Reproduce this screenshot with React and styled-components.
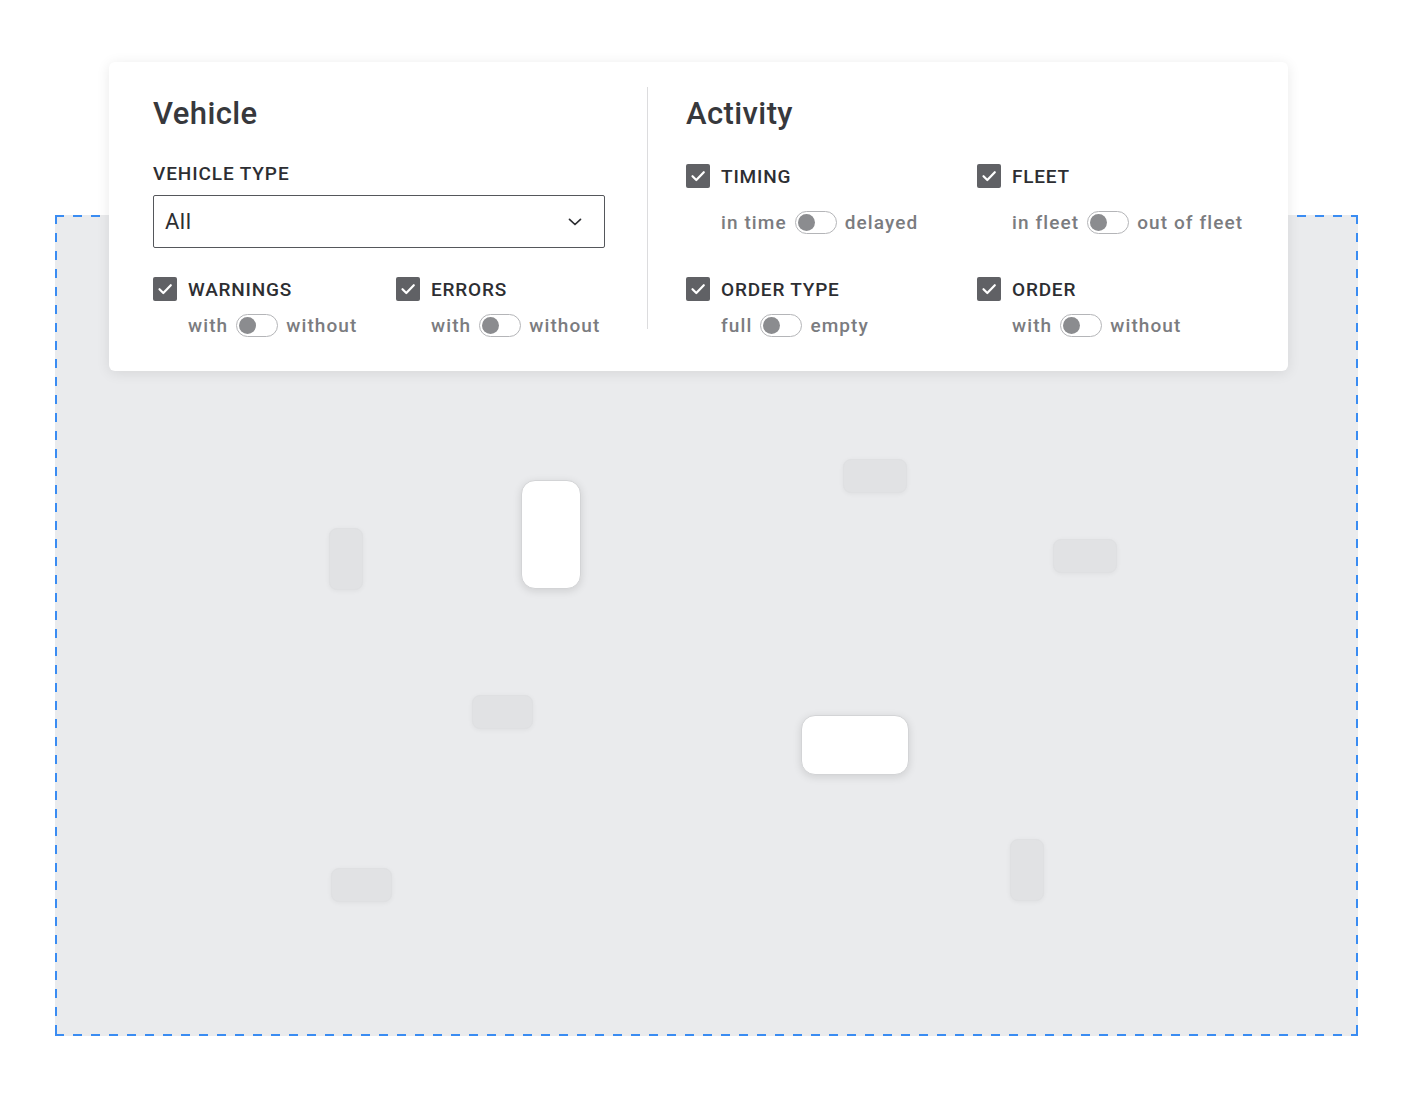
import React, { useState } from 'react';
import styled, { createGlobalStyle } from 'styled-components';

const GlobalStyle = createGlobalStyle`
  html, body {
    margin: 0;
    padding: 0;
    background: #ffffff;
  }
  body {
    font-family: Roboto, "Liberation Sans", sans-serif;
    -webkit-font-smoothing: antialiased;
  }
`;

const Stage = styled.div`
  position: relative;
  width: 1405px;
  height: 1098px;
  padding: 215px 0 0 55px;
  box-sizing: border-box;
`;

const DASH = '#3a8cf2';

const MapArea = styled.div`
  position: relative;
  width: 1303px;
  height: 821px;
  background:
    linear-gradient(90deg, ${DASH} 52%, transparent 52%) top left / 18px 2px repeat-x,
    linear-gradient(90deg, ${DASH} 52%, transparent 52%) bottom left / 18px 2px repeat-x,
    linear-gradient(180deg, ${DASH} 52%, transparent 52%) top left / 2px 18px repeat-y,
    linear-gradient(180deg, ${DASH} 52%, transparent 52%) top right / 2px 18px repeat-y,
    #eaebed;
`;

const Node = styled.div`
  position: absolute;
  box-sizing: border-box;
  background: ${p => (p.$active ? '#ffffff' : '#e1e2e4')};
  border-radius: ${p => (p.$active ? '14px' : '8px')};
  border: 1px solid ${p => (p.$active ? '#d3d4d6' : '#dfe0e2')};
  box-shadow: ${p =>
    p.$active ? '0 2px 8px rgba(0, 0, 0, 0.12)' : '0 1px 5px rgba(0, 0, 0, 0.05)'};
`;

const Panel = styled.div`
  position: absolute;
  left: 109px;
  top: 62px;
  width: 1179px;
  height: 309px;
  box-sizing: border-box;
  padding: 32px 44px 0;
  display: flex;
  background: #ffffff;
  border-radius: 6px;
  box-shadow: 0 2px 14px rgba(0, 0, 0, 0.09);
  z-index: 2;
`;

const Section = styled.section`
  width: ${p => p.$width}px;
  flex-shrink: 0;
`;

const Divider = styled.div`
  width: 1px;
  flex-shrink: 0;
  align-self: flex-start;
  height: 242px;
  margin: -7px 38px 0 42px;
  background: #dcdcde;
`;

const Heading = styled.h2`
  margin: 0;
  height: 36px;
  line-height: 40px;
  font-size: 31px;
  font-weight: 500;
  color: #37383c;
  letter-spacing: 0.4px;
`;

const FieldLabel = styled.div`
  margin-top: 32px;
  height: 24px;
  line-height: 24px;
  font-size: 19px;
  font-weight: 500;
  color: #2d2e32;
  letter-spacing: 0.9px;
  text-transform: uppercase;
`;

const SelectBox = styled.div`
  margin-top: 9px;
  height: 53px;
  box-sizing: border-box;
  border: 1.5px solid #55575b;
  border-radius: 2px;
  display: flex;
  align-items: center;
  justify-content: space-between;
  padding: 0 22px 0 11px;
  font-size: 22px;
  color: #2d2e32;
  letter-spacing: 0.5px;
  cursor: pointer;
`;

const Grid = styled.div`
  display: grid;
  grid-template-columns: repeat(2, ${p => p.$col}px);
  row-gap: ${p => p.$rowGap}px;
  margin-top: ${p => p.$top}px;
`;

const Group = styled.div`
  display: flex;
  flex-direction: column;
  gap: ${p => (p.$loose ? 22 : 12)}px;
`;

const CheckRow = styled.label`
  display: flex;
  align-items: center;
  gap: 11px;
  height: 24px;
  font-size: 19px;
  font-weight: 500;
  color: #2d2e32;
  letter-spacing: 0.8px;
  text-transform: uppercase;
  cursor: pointer;
`;

const Box = styled.span`
  width: 24px;
  height: 24px;
  border-radius: 2px;
  background: #606165;
  display: flex;
  align-items: center;
  justify-content: center;
  flex-shrink: 0;
`;

const ToggleRow = styled.div`
  display: flex;
  align-items: center;
  gap: 8px;
  height: 24px;
  padding-left: 35px;
  font-size: 19px;
  font-weight: 500;
  color: #7b7c80;
  letter-spacing: 1.1px;
`;

const Track = styled.button`
  position: relative;
  width: 42px;
  height: 23px;
  padding: 0;
  box-sizing: border-box;
  border: 1px solid #b4b5b8;
  border-radius: 12px;
  background: #ffffff;
  cursor: pointer;
`;

const Knob = styled.span`
  position: absolute;
  top: 2px;
  left: ${p => (p.$on ? '21px' : '2px')};
  width: 17px;
  height: 17px;
  border-radius: 50%;
  background: #8b8c8f;
`;

const Check = () => (
  <svg width="18" height="18" viewBox="0 0 18 18" fill="none">
    <path d="M3.5 9.2 L7.3 13 L14.8 5.2" stroke="#ffffff" strokeWidth="2.2" strokeLinecap="round" strokeLinejoin="round" />
  </svg>
);

const Chevron = () => (
  <svg width="14" height="8" viewBox="0 0 14 8" fill="none">
    <path d="M1.5 1.3 L7 6.5 L12.5 1.3" stroke="#2d2e32" strokeWidth="1.7" strokeLinecap="round" strokeLinejoin="round" />
  </svg>
);

function Filter({ label, left, right, loose }) {
  const [on, setOn] = useState(false);
  return (
    <Group $loose={loose}>
      <CheckRow>
        <Box><Check /></Box>
        {label}
      </CheckRow>
      <ToggleRow>
        <span>{left}</span>
        <Track onClick={() => setOn(!on)}><Knob $on={on} /></Track>
        <span>{right}</span>
      </ToggleRow>
    </Group>
  );
}

const nodes = [
  { x: 274, y: 313, w: 34, h: 62 },
  { x: 466, y: 265, w: 60, h: 109, active: true },
  { x: 788, y: 244, w: 64, h: 34 },
  { x: 998, y: 324, w: 64, h: 34 },
  { x: 746, y: 500, w: 108, h: 60, active: true },
  { x: 417, y: 480, w: 61, h: 34 },
  { x: 276, y: 653, w: 61, h: 34 },
  { x: 955, y: 624, w: 34, h: 62 },
];

export default function App() {
  return (
    <>
      <GlobalStyle />
      <Stage>
        <MapArea>
          {nodes.map((n, i) => (
            <Node
              key={i}
              $active={n.active}
              style={{ left: n.x, top: n.y, width: n.w, height: n.h }}
            />
          ))}
        </MapArea>

        <Panel>
          <Section $width={452}>
            <Heading>Vehicle</Heading>
            <FieldLabel>Vehicle type</FieldLabel>
            <SelectBox>
              <span>All</span>
              <Chevron />
            </SelectBox>
            <Grid $col={243} $rowGap={0} $top={29}>
              <Filter label="Warnings" left="with" right="without" />
              <Filter label="Errors" left="with" right="without" />
            </Grid>
          </Section>

          <Divider />

          <Section $width={558}>
            <Heading>Activity</Heading>
            <Grid $col={291} $rowGap={43} $top={34}>
              <Filter label="Timing" left="in time" right="delayed" loose />
              <Filter label="Fleet" left="in fleet" right="out of fleet" loose />
              <Filter label="Order type" left="full" right="empty" />
              <Filter label="Order" left="with" right="without" />
            </Grid>
          </Section>
        </Panel>
      </Stage>
    </>
  );
}
